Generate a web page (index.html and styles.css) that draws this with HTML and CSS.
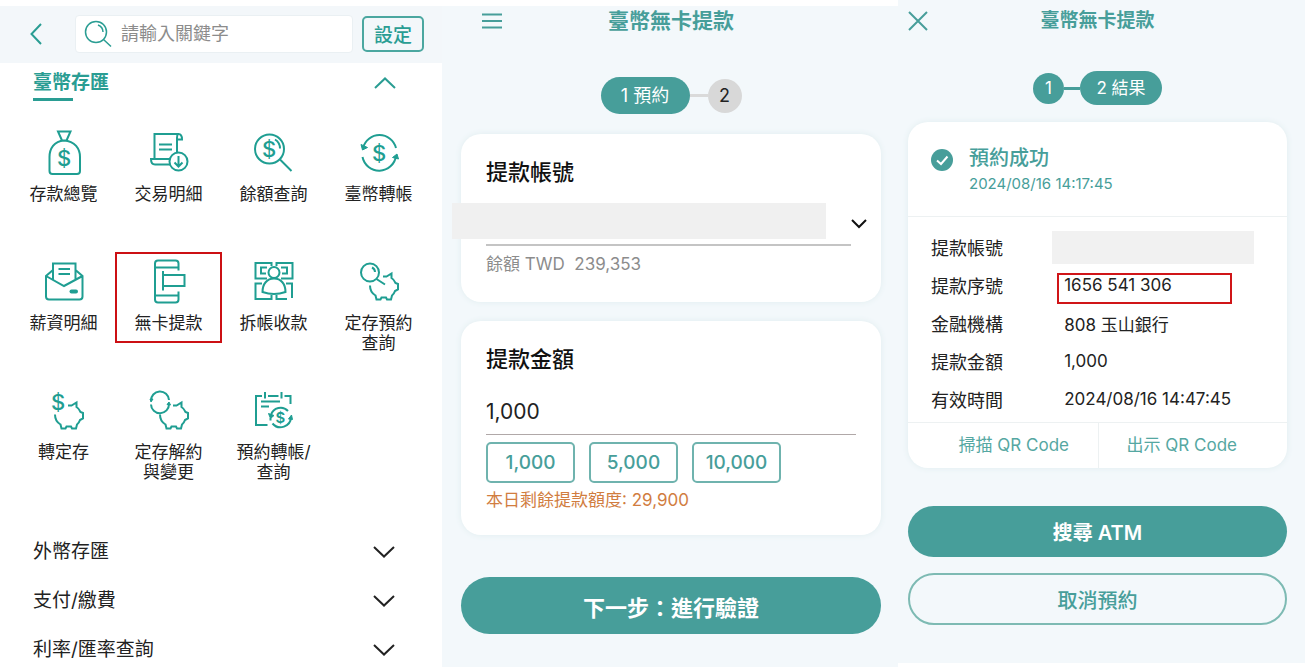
FILE: index.html
```html
<!DOCTYPE html>
<html lang="zh-Hant">
<head>
  <meta charset="UTF-8" />
  <meta name="viewport" content="width=device-width, initial-scale=1" />
  <title>臺幣無卡提款</title>
  <link rel="stylesheet" href="styles.css">
</head>
<body>
  <!-- Shared shapes -->
  <svg class="defs" aria-hidden="true">
    <symbol id="pig" viewBox="0 0 48 48">
      <path d="M15 27.500C15 32 17 35.500 20.500 37.500L21.500 41.500H25.500L26.500 39.500H31L32 41.500H36L37 37.500Q39 36 40 33L43 31.500V26L40.500 25Q39 21.500 36.500 20V15.500L31.500 18.500H28" />
    </symbol>
    <symbol id="down" viewBox="0 0 22 12">
      <path d="M1 1l10 9.500L21 1" />
    </symbol>
  </svg>

  <div class="screens">
    <!-- Menu -->
    <section class="screen menu">
      <div class="topbar">
        <a href="#" class="back" aria-label="返回">
          <svg width="12" height="22" viewBox="0 0 12 22"><path d="M11 1L1.500 11L11 21" /></svg>
        </a>
        <label class="search">
          <svg width="28" height="28" viewBox="0 0 28 28">
            <circle cx="12" cy="12" r="10.500" /><path d="M19.500 19.500L27 26.500M14 5q5 2 5 7" />
          </svg>
          <input type="search" placeholder="請輸入關鍵字" aria-label="請輸入關鍵字" />
        </label>
        <button class="setting">設定</button>
      </div>

      <div class="group-head">
        <h2>臺幣存匯</h2>
        <button class="toggle" aria-label="收合">
          <svg width="22" height="12" viewBox="0 0 22 12"><path d="M1 11L11 1.500L21 11" /></svg>
        </button>
      </div>

      <nav class="services">
        <a href="#" class="service">
          <svg class="icon" viewBox="0 0 48 48">
            <path d="M22 11.500L18 2.500H30.500L26.500 11.500M22 11.500H26.500M24 11.500C14 12 9.500 20 9.500 28V42q0 3 3 3H37q3 0 3-3V28C40 20 35 12 24 11.500" />
            <text x="24" y="37">$</text>
          </svg>
          <span>存款總覽</span>
        </a>
        <a href="#" class="service">
          <svg class="icon" viewBox="0 0 48 48">
            <path d="M9.500 30V5H33.500q3.500 0 3.500 5.500H32M33 5.500Q32 6 32 9V23.500M24 30H6q0 5.500 4 5.500H25M14 15.500H27M14 20.500H27" />
            <circle cx="33.500" cy="32.500" r="9" /><path d="M33.500 27v10.500m-4-4l4 4l4-4" />
          </svg>
          <span>交易明細</span>
        </a>
        <a href="#" class="service">
          <svg class="icon" viewBox="0 0 48 48">
            <circle cx="19.500" cy="20" r="14.500" /><path d="M30 30.500L41.500 42M25 10.500Q30 13.500 30 19.500" />
            <text x="19" y="27.500">$</text>
          </svg>
          <span>餘額查詢</span>
        </a>
        <a href="#" class="service">
          <svg class="icon" viewBox="0 0 48 48">
            <path d="M8 19A17 17 0 0 1 41 19M7.500 28A17 17 0 0 0 41 27" />
            <path class="fill" d="M6 15.500L7.500 21L12.500 18.500ZM37.500 28.500L42 25L43.500 30Z" />
            <text x="24" y="31.500">$</text>
          </svg>
          <span>臺幣轉帳</span>
        </a>

        <a href="#" class="service">
          <svg class="icon" viewBox="0 0 48 48">
            <path d="M13 12L6 18V38.500q0 3 3 3H39.500q3 0 3-3V18L35.500 12M13 21.500V5.500H35.500V21.500M6 18L24 28L42.500 18M18.500 11H30M18.500 16H30" />
            <path class="thick" d="M31.500 33.500H36" />
          </svg>
          <span>薪資明細</span>
        </a>
        <a href="#" class="service marked">
          <svg class="icon" viewBox="0 0 48 48">
            <path d="M33.500 12.500V5.500q0-3-3-3H13q-3 0-3 3V41.500q0 3 3 3H30.500q3 0 3-3V33.500M10 9.500H33.500M10 37.500H33.500M18 13V32.500M18 17H39.500V28H18" />
          </svg>
          <span>無卡提款</span>
        </a>
        <a href="#" class="service">
          <svg class="icon" viewBox="0 0 48 48">
            <path d="M21.500 8V5H5.500V20.500H17M26.500 8V5H42.500V20.500H31M17 9.500H11V15.500H16M31 9.500H37V15.500H32M12 25.500H5.500V41H21.500V37M26.500 37V41H37M36 25.500H42V40" />
            <circle cx="24" cy="14.500" r="5.500" />
            <path d="M24 20.500C17 20.500 12.500 26 12.500 34Q24 38 35.500 34C35.500 26 31 20.500 24 20.500" />
          </svg>
          <span>拆帳收款</span>
        </a>
        <a href="#" class="service">
          <svg class="icon" viewBox="0 0 48 48">
            <use href="#pig" /><circle cx="15" cy="14.500" r="9" /><path d="M21.500 21L30 26.500M17 9.500Q20 11 20 14" />
          </svg>
          <span>定存預約<br>查詢</span>
        </a>

        <a href="#" class="service">
          <svg class="icon" viewBox="0 0 48 48">
            <use href="#pig" /><text x="18" y="23">$</text>
          </svg>
          <span>轉定存</span>
        </a>
        <a href="#" class="service">
          <svg class="icon" viewBox="0 0 48 48">
            <use href="#pig" /><path d="M6 14A9 9 0 0 1 24 13M6 17.500A9 9 0 0 0 24 17" />
            <path class="fill" d="M5 12H8L6 15ZM22 17.500L24 15L25.500 18Z" />
          </svg>
          <span>定存解約<br>與變更</span>
        </a>
        <a href="#" class="service">
          <svg class="icon" viewBox="0 0 48 48">
            <path d="M12 9H6V38H17.500M18 9H28.500M34.500 9H40.500V17M15 5V11.500M31.500 5V11.500M11 14.500H30M11 19.500H19" />
            <path d="M21 28A10 10 0 0 1 38 24M41 30A10.500 10.500 0 0 1 22.500 36.500M20.500 31V33.500" />
            <path class="fill" d="M18.500 26.500L24 28.500L20.500 31.500ZM38.500 32L42.500 32.500L41.500 28Z" />
            <text class="small" x="30.500" y="36">$</text>
          </svg>
          <span>預約轉帳/<br>查詢</span>
        </a>
      </nav>

      <ul class="groups">
        <li><button>外幣存匯<svg width="22" height="12"><use href="#down" /></svg></button></li>
        <li><button>支付/繳費<svg width="22" height="12"><use href="#down" /></svg></button></li>
        <li><button>利率/匯率查詢<svg width="22" height="12"><use href="#down" /></svg></button></li>
      </ul>
    </section>

    <!-- Step 1 -->
    <section class="screen booking">
      <header class="title">
        <button class="nav-btn" aria-label="選單">
          <svg width="20" height="16" viewBox="0 0 20 16"><path d="M0 1.500H20M0 8H20M0 14.500H20" /></svg>
        </button>
        <h1>臺幣無卡提款</h1>
      </header>

      <div class="steps">
        <span class="pill">1 預約</span>
        <span class="link idle"></span>
        <span class="dot idle">2</span>
      </div>

      <form>
        <div class="card">
          <h2><label for="account">提款帳號</label></h2>
          <div class="account">
            <select id="account"><option></option></select>
            <svg width="16" height="10" viewBox="0 0 16 10"><path d="M1 1l7 7l7-7" /></svg>
          </div>
          <p class="balance">餘額 TWD&nbsp; 239,353</p>
        </div>

        <div class="card">
          <h2><label for="amount">提款金額</label></h2>
          <input id="amount" class="amount" type="text" inputmode="numeric" value="1,000" />
          <div class="presets">
            <button type="button">1,000</button>
            <button type="button">5,000</button>
            <button type="button">10,000</button>
          </div>
          <p class="quota">本日剩餘提款額度: 29,900</p>
        </div>

        <button type="button" class="btn next">下一步：進行驗證</button>
      </form>
    </section>

    <!-- Step 2 -->
    <section class="screen result">
      <header class="title">
        <button class="nav-btn" aria-label="關閉">
          <svg width="20" height="20" viewBox="0 0 20 20"><path d="M1 1L19 19M19 1L1 19" /></svg>
        </button>
        <h1>臺幣無卡提款</h1>
      </header>

      <div class="steps">
        <span class="dot">1</span>
        <span class="link"></span>
        <span class="pill">2 結果</span>
      </div>

      <div class="card">
        <div class="done">
          <svg width="22" height="22" viewBox="0 0 22 22">
            <circle cx="11" cy="11" r="11" /><path d="M6 11.500L10 15L16.500 7.500" />
          </svg>
          <div>
            <h2>預約成功</h2>
            <p>2024/08/16 14:17:45</p>
          </div>
        </div>
        <div class="detail">
          <table>
            <tr><th scope="row">提款帳號</th><td><div class="masked"></div></td></tr>
            <tr><th scope="row">提款序號</th><td class="serial">1656 541 306</td></tr>
            <tr><th scope="row">金融機構</th><td>808 玉山銀行</td></tr>
            <tr><th scope="row">提款金額</th><td>1,000</td></tr>
            <tr><th scope="row">有效時間</th><td>2024/08/16 14:47:45</td></tr>
          </table>
        </div>
        <div class="qr">
          <a href="#">掃描 QR Code</a>
          <a href="#">出示 QR Code</a>
        </div>
      </div>

      <button class="btn">搜尋 ATM</button>
      <button class="btn outline">取消預約</button>
    </section>
  </div>
</body>
</html>
```
FILE: styles.css
```css
*, *::after { box-sizing: border-box; }
body {
  margin: 0;
  background: #fff;
  color: #222;
  font-family: Inter, "Noto Sans CJK TC", sans-serif;
  font-size: 18px;
}
h1, h2, p, ul { margin: 0; padding: 0; }
a { color: inherit; text-decoration: none; }
button, input, select {
  font: inherit;
  color: inherit;
  margin: 0;
  padding: 0;
  border: none;
  background: none;
}
button { cursor: pointer; }
svg {
  display: block;
  flex: none;
  fill: none;
  stroke: currentColor;
  stroke-width: 2px;
}
.defs { position: absolute; width: 0; height: 0; }

.screens {
  display: grid;
  grid-template-columns: minmax(0, 442fr) minmax(0, 456fr) minmax(0, 407fr);
  min-height: 100vh;
}
.menu, .booking { margin-top: 6px; }
.booking, .result { background: #f3f8fb; }

/* Menu */
.topbar {
  display: flex;
  align-items: center;
  gap: 9px;
  height: 57px;
  padding: 0 18px 2px 30px;
  background: #f3f7fa;
  color: #2a9d93;
}
.back { width: 36px; }
.search {
  flex: 1;
  min-width: 0;
  display: flex;
  align-items: center;
  gap: 9px;
  height: 38px;
  padding: 0 8px;
  border: 1px solid #eaf0f3;
  border-radius: 4px;
  background: #fff;
}
.search svg { stroke-width: 1.500px; }
.search input {
  flex: 1;
  min-width: 0;
  outline: none;
  color: #222;
}
.search input::placeholder { color: #8c8c8c; opacity: 1; }
.setting {
  width: 62px;
  height: 36px;
  border: 2px solid #4ba7a0;
  border-radius: 5px;
  font-size: 19px;
  font-weight: 500;
}
.group-head {
  display: flex;
  justify-content: space-between;
  align-items: flex-start;
  padding: 6px 46px 0 33px;
  color: #2a9d93;
}
.group-head h2 {
  font-size: 19px;
  line-height: 28px;
  font-weight: 700;
}
.group-head h2::after {
  content: "";
  display: block;
  width: 40px;
  height: 3px;
  margin-top: 1px;
  background: #2a9d93;
}
.toggle { height: 28px; }
.services {
  display: grid;
  grid-template-columns: repeat(4, 1fr);
  row-gap: 34px;
  padding: 28px 11px 0;
}
.service {
  position: relative;
  display: flex;
  flex-direction: column;
  align-items: center;
  gap: 7px;
  min-height: 95px;
  font-size: 17px;
  line-height: 20px;
  text-align: center;
}
.icon {
  width: 48px;
  height: 48px;
  color: #1f9e92;
}
.icon text {
  fill: currentColor;
  stroke: none;
  font-size: 22px;
  font-weight: 500;
  text-anchor: middle;
}
.icon .small { font-size: 15px; font-weight: 600; }
.icon .fill { fill: currentColor; stroke-width: 1px; }
.icon .thick { stroke-width: 4px; stroke-linecap: round; }
.marked::after {
  content: "";
  position: absolute;
  inset: -6px -1px 10px;
  border: 2px solid #cc1014;
}
.groups {
  display: grid;
  gap: 21px;
  margin-top: 56px;
  list-style: none;
}
.groups button {
  display: flex;
  justify-content: space-between;
  align-items: center;
  width: 100%;
  padding: 0 47px 0 33px;
  font-size: 19px;
  line-height: 28px;
}

/* Title and steps */
.booking { padding: 0 17px 0 19px; }
.result {
  margin-bottom: 4px;
  padding: 6px 18px 0 10px;
}
.title {
  display: grid;
  grid-template-columns: 40px 1fr 40px;
  align-items: center;
  color: #479e9a;
}
.title h1 {
  font-size: 21px;
  line-height: 29px;
  font-weight: 700;
  text-align: center;
}
.booking .nav-btn { padding-left: 21px; }
.result h1 { font-size: 19px; }
.steps {
  display: flex;
  justify-content: center;
  align-items: center;
  margin: 42px 0 20px;
}
.pill, .dot {
  background: #479e9a;
  color: #fff;
  text-align: center;
  border-radius: 20px;
}
.pill { width: 89px; line-height: 37px; }
.dot { width: 34px; line-height: 34px; }
.link {
  width: 18px;
  height: 3px;
  background: #479e9a;
}
.link.idle { background: #dadada; }
.dot.idle { background: #d8d8d8; color: #222; }
.result .steps { margin: 36px 0 17px; font-size: 17px; }
.result .pill { width: 82px; line-height: 34px; }
.result .dot { width: 31px; line-height: 31px; }
.result .link { width: 16px; }

.card {
  border-radius: 20px;
  background: #fff;
  box-shadow: 0 0 6px #e0edef;
}

/* Step 1 */
.booking .card {
  margin-bottom: 19px;
  padding: 23px 25px;
}
.booking h2 {
  font-size: 22px;
  line-height: 30px;
  font-weight: 500;
  color: #111;
}
.account {
  display: flex;
  align-items: center;
  gap: 25px;
  margin: 16px -11px 5px -34px;
  color: #111;
}
.account select {
  flex: 1;
  height: 36px;
  appearance: none;
  background: #f0f0f0;
}
.account svg { margin-top: 6px; }
.balance {
  margin-right: 5px;
  padding: 6px 0 3px;
  border-top: 2px solid #c4c4c4;
  font-size: 17px;
  line-height: 24px;
  color: #8c8c8c;
}
.amount {
  display: block;
  width: 100%;
  height: 38px;
  margin: 23px 0 7px;
  padding-bottom: 8px;
  border-bottom: 1px solid #b0a8a8;
  font-size: 21px;
}
.presets {
  display: flex;
  gap: 14px;
}
.presets button {
  width: 89px;
  height: 41px;
  border: 2px solid #6fb3ae;
  border-radius: 5px;
  color: #479e9a;
  font-size: 19px;
  font-weight: 500;
}
.quota {
  margin-top: 5px;
  font-size: 17px;
  line-height: 24px;
  color: #d17d3f;
}
.btn {
  display: block;
  width: 100%;
  height: 51px;
  border-radius: 30px;
  background: #479e9a;
  color: #fff;
  font-size: 20px;
  font-weight: 600;
}
.next {
  height: 57px;
  margin-top: 42px;
  font-size: 22px;
}

/* Step 2 */
.result .card { margin-bottom: 38px; }
.done {
  display: flex;
  gap: 16px;
  padding: 22px 23px 20px;
  color: #479e9a;
}
.done svg { margin-top: 5px; }
.done circle { fill: currentColor; stroke: none; }
.done path { stroke: #fff; }
.done h2 {
  font-size: 20px;
  line-height: 28px;
  font-weight: 500;
}
.done p {
  font-size: 15px;
  line-height: 24px;
}
.detail {
  padding: 11px 23px 4px;
  border: solid #edf1f2;
  border-width: 1px 0;
}
table {
  width: 100%;
  border-collapse: collapse;
}
th, td {
  height: 38px;
  padding: 0;
  text-align: left;
  font-weight: 400;
  white-space: nowrap;
}
th { width: 40%; }
td { font-size: 17px; }
.masked {
  width: 202px;
  height: 33px;
  margin-left: -12px;
  background: #f1f1f1;
}
.serial { position: relative; }
.serial::after {
  content: "";
  position: absolute;
  top: 7px;
  left: -7px;
  width: 175px;
  height: 31px;
  border: 2px solid #d01518;
}
.qr {
  display: grid;
  grid-template-columns: 1fr 1fr;
  font-size: 17px;
  line-height: 45px;
  text-align: center;
  color: #55a7a2;
}
.qr a { padding-left: 22px; }
.qr a + a {
  padding: 0 22px 0 0;
  border-left: 1px solid #edf1f2;
}
.outline {
  height: 52px;
  margin-top: 16px;
  border: 2px solid #7dbab3;
  background: none;
  color: #479e9a;
  font-weight: 500;
}
```
